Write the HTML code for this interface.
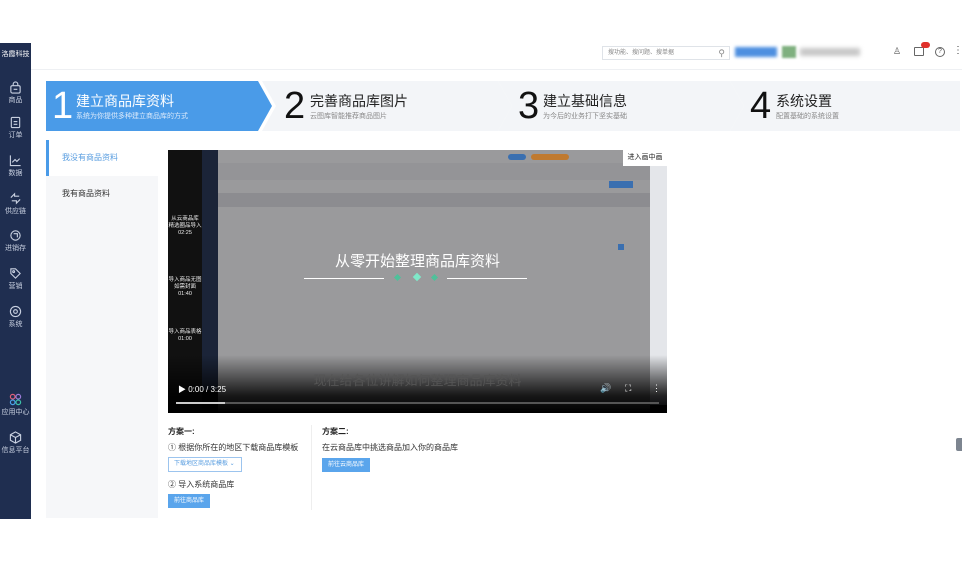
<!DOCTYPE html>
<html><head><meta charset="utf-8"><style>
*{margin:0;padding:0;box-sizing:border-box}
body{width:962px;height:561px;background:#fff;font-family:"Liberation Sans","Noto Sans CJK SC",sans-serif;position:relative;overflow:hidden;color:#333}
.abs{position:absolute}
.side{left:0;top:43px;width:31px;height:476px;background:#1f2e50;color:#c8d0e0;font-size:7px;text-align:center}
.side .it{position:absolute;left:0;width:31px}
.side svg{display:block;margin:0 auto 1px}
.hdr{left:31px;top:43px;width:931px;height:27px;background:#fff;border-bottom:1px solid #eef0f3}
.step{top:81px;height:50px;background:#f3f5f8}
.step .n{position:absolute;top:3px;font-size:38px;line-height:44px;color:#111;font-weight:300}
.step .t{position:absolute;top:10px;font-size:14px;color:#222}
.step .s{position:absolute;top:30px;font-size:7px;color:#888}
.menu{left:46px;top:140px;width:112px;height:378px;background:#f6f7f9}
.btn{background:#5aa5ec;color:#fff;font-size:6px;height:14px;line-height:14px;padding:0 6px;display:inline-block}
</style></head><body>
<div class="abs side">
 <div class="it" style="top:6px;font-size:7px;color:#fff">洛霞科技</div>
 <div class="it" style="top:38px"><svg width="13" height="13" viewBox="0 0 14 14" fill="none" stroke="#c8d0e0" stroke-width="1.2"><rect x="2" y="5" width="10" height="8" rx="1.5"/><path d="M4.5 5V3.5a2.5 2.5 0 015 0V5M5 9h4"/></svg>商品</div>
 <div class="it" style="top:73px"><svg width="13" height="13" viewBox="0 0 14 14" fill="none" stroke="#c8d0e0" stroke-width="1.2"><rect x="2.5" y="1.5" width="9" height="11" rx="1"/><path d="M5 6h4M5 9h4"/></svg>订单</div>
 <div class="it" style="top:111px"><svg width="13" height="13" viewBox="0 0 14 14" fill="none" stroke="#c8d0e0" stroke-width="1.2"><path d="M1.5 1.5v11h11M3.5 9l3-3 2 2 3-3"/></svg>数据</div>
 <div class="it" style="top:149px"><svg width="13" height="13" viewBox="0 0 14 14" fill="none" stroke="#c8d0e0" stroke-width="1.2"><path d="M2 6l4-4v2.5h5M12 8l-4 4V9.5H3"/></svg>供应链</div>
 <div class="it" style="top:186px"><svg width="13" height="13" viewBox="0 0 14 14" fill="none" stroke="#c8d0e0" stroke-width="1.2"><circle cx="7" cy="7" r="5"/><path d="M5 5h4v4"/></svg>进销存</div>
 <div class="it" style="top:224px"><svg width="13" height="13" viewBox="0 0 14 14" fill="none" stroke="#c8d0e0" stroke-width="1.2"><path d="M2 2h5l5 5-5 5-5-5z"/><circle cx="5" cy="5" r="1"/></svg>营销</div>
 <div class="it" style="top:262px"><svg width="13" height="13" viewBox="0 0 14 14" fill="none" stroke="#c8d0e0" stroke-width="1.2"><circle cx="7" cy="7" r="5.5"/><circle cx="7" cy="7" r="2"/></svg>系统</div>
 <div class="it" style="top:350px"><svg width="13" height="13" viewBox="0 0 14 14" fill="none" stroke-width="1.3"><circle cx="4" cy="4" r="2.5" stroke="#e0607a"/><circle cx="10" cy="4" r="2.5" stroke="#9b7bd8"/><circle cx="4" cy="10" r="2.5" stroke="#4aa0e8"/><circle cx="10" cy="10" r="2.5" stroke="#3cc0a8"/></svg>应用中心</div>
 <div class="it" style="top:388px"><svg width="13" height="13" viewBox="0 0 14 14" fill="none" stroke="#c8d0e0" stroke-width="1.2"><path d="M7 1l5.5 3v6L7 13 1.5 10V4zM1.5 4L7 7l5.5-3M7 7v6"/></svg>信息平台</div>
</div>
<div class="abs hdr"></div>
<div class="abs" style="left:602px;top:46px;width:128px;height:14px;border:1px solid #dfe3e8;font-size:6px;color:#888;line-height:12px;padding-left:5px">搜功能、搜问题、搜单据<span style="position:absolute;right:4px;top:0;font-size:9px">⚲</span></div>
<div class="abs" style="left:735px;top:47px;width:42px;height:10px;background:#4d8fe0;filter:blur(1.5px)"></div>
<div class="abs" style="left:782px;top:46px;width:14px;height:12px;background:#7fb07f;filter:blur(1px)"></div>
<div class="abs" style="left:800px;top:48px;width:60px;height:8px;background:#c8c8c8;filter:blur(2px)"></div>
<div class="abs" style="left:893px;top:46px;font-size:9px;color:#555">♙</div>
<div class="abs" style="left:914px;top:47px;width:10px;height:9px;border:1px solid #666;border-radius:1px"></div>
<div class="abs" style="left:921px;top:42px;width:9px;height:6px;background:#e0302a;border-radius:3px"></div>
<div class="abs" style="left:935px;top:47px;width:10px;height:10px;border:1px solid #666;border-radius:50%;font-size:7px;line-height:8px;text-align:center;color:#555">?</div>
<div class="abs" style="left:953px;top:45px;font-size:10px;color:#444">⋮</div>

<div class="abs step" style="left:46px;width:226px;background:#4a9be8;clip-path:polygon(0 0,212px 0,226px 25px,212px 50px,0 50px)">
 <div class="n" style="left:6px;color:#fff">1</div><div class="t" style="left:30px;color:#fff">建立商品库资料</div><div class="s" style="left:30px;color:#dbeafb">系统为你提供多种建立商品库的方式</div></div>
<div class="abs step" style="left:262px;width:250px;clip-path:polygon(0 0,236px 0,250px 25px,236px 50px,0 50px,14px 25px)">
 <div class="n" style="left:22px">2</div><div class="t" style="left:48px">完善商品库图片</div><div class="s" style="left:48px">云图库智能推荐商品图片</div></div>
<div class="abs step" style="left:498px;width:246px;clip-path:polygon(0 0,232px 0,246px 25px,232px 50px,0 50px,14px 25px)">
 <div class="n" style="left:20px">3</div><div class="t" style="left:45px">建立基础信息</div><div class="s" style="left:45px">为今后的业务打下坚实基础</div></div>
<div class="abs step" style="left:730px;width:230px;clip-path:polygon(0 0,230px 0,230px 50px,0 50px,14px 25px)">
 <div class="n" style="left:20px">4</div><div class="t" style="left:46px">系统设置</div><div class="s" style="left:46px">配置基础的系统设置</div></div>

<div class="abs menu"></div>
<div class="abs" style="left:46px;top:140px;width:112px;height:36px;background:#fff;border-left:3px solid #4a9be8;font-size:8px;color:#5a9ee0;line-height:36px;padding-left:13px">我没有商品资料</div>
<div class="abs" style="left:62px;top:188px;font-size:8px;color:#333">我有商品资料</div>

<div class="abs" style="left:168px;top:150px;width:499px;height:263px;background:#000;overflow:hidden">
 <div class="abs" style="left:0;top:0;width:34px;height:263px;background:#111"></div>
 <div class="abs" style="left:34px;top:0;width:16px;height:240px;background:#1b2438"></div>
 <div class="abs" style="left:50px;top:0;width:432px;height:263px;background:#9a9a9c"></div>
 <div class="abs" style="left:50px;top:13px;width:432px;height:17px;background:#949497"></div>
 <div class="abs" style="left:50px;top:43px;width:432px;height:14px;background:#8c8c90"></div>
 <div class="abs" style="left:482px;top:0;width:17px;height:255px;background:#e4e6ea"></div>
 <div class="abs" style="left:455px;top:0;width:44px;height:16px;background:#fff;font-size:7px;line-height:16px;text-align:center;color:#222">进入画中画</div>
 <div class="abs" style="left:340px;top:4px;width:18px;height:6px;background:#3a6fb0;border-radius:3px"></div>
 <div class="abs" style="left:363px;top:4px;width:38px;height:6px;background:#c07a30;border-radius:3px"></div>
 <div class="abs" style="left:441px;top:31px;width:24px;height:7px;background:#3a6fb0"></div>
 <div class="abs" style="left:450px;top:94px;width:6px;height:6px;background:#3a6fb0"></div>
 <div class="abs" style="left:0;top:66px;width:34px;font-size:5.5px;color:#eee;text-align:center;line-height:7px">从云商品库<br>精选圈品导入<br>02:25</div>
 <div class="abs" style="left:0;top:127px;width:34px;font-size:5.5px;color:#eee;text-align:center;line-height:7px">导入商品无图<br>如需封面<br>01:40</div>
 <div class="abs" style="left:0;top:179px;width:34px;font-size:5.5px;color:#eee;text-align:center;line-height:7px">导入商品表格<br>01:00</div>
 <div class="abs" style="left:0;top:100px;width:499px;text-align:center;font-size:15px;color:#fff">从零开始整理商品库资料</div>
 <div class="abs" style="left:136px;top:128px;width:80px;height:1px;background:#fff"></div>
 <div class="abs" style="left:279px;top:128px;width:80px;height:1px;background:#fff"></div>
 <div class="abs" style="left:227px;top:125px;width:5px;height:5px;background:#4fc09a;transform:rotate(45deg)"></div>
 <div class="abs" style="left:246px;top:124px;width:6px;height:6px;background:#7fe8c8;transform:rotate(45deg)"></div>
 <div class="abs" style="left:264px;top:125px;width:5px;height:5px;background:#4fc09a;transform:rotate(45deg)"></div>
 <div class="abs" style="left:0;top:205px;width:499px;height:58px;background:linear-gradient(rgba(0,0,0,0),rgba(0,0,0,.85) 70%,#000)"></div>
 <div class="abs" style="left:0;top:220px;width:499px;text-align:center;font-size:13px;color:#555">现在给各位讲解如何整理商品库资料</div>
 <div class="abs" style="left:10px;top:234px;font-size:8px;color:#fff">▶ 0:00 / 3:25</div>
 <div class="abs" style="left:432px;top:233px;font-size:9px;color:#fff">🔊</div>
 <div class="abs" style="left:457px;top:233px;font-size:9px;color:#fff">⛶</div>
 <div class="abs" style="left:484px;top:233px;font-size:9px;color:#fff">⋮</div>
 <div class="abs" style="left:8px;top:252px;width:483px;height:2px;background:#555"></div>
 <div class="abs" style="left:8px;top:252px;width:49px;height:2px;background:#ccc"></div>
</div>

<div class="abs" style="left:168px;top:426px;font-size:8px;font-weight:bold;color:#222">方案一:</div>
<div class="abs" style="left:168px;top:442px;font-size:8px;color:#333">① 根据你所在的地区下载商品库模板</div>
<div class="abs" style="left:168px;top:457px;width:74px;height:15px;border:1px solid #9cc4ee;font-size:6px;color:#5a9ee0;line-height:13px;padding-left:5px">下载地区商品库模板 ⌄</div>
<div class="abs" style="left:168px;top:479px;font-size:8px;color:#333">② 导入系统商品库</div>
<div class="abs btn" style="left:168px;top:494px">前往商品库</div>
<div class="abs" style="left:311px;top:425px;width:1px;height:85px;background:#eee"></div>
<div class="abs" style="left:322px;top:426px;font-size:8px;font-weight:bold;color:#222">方案二:</div>
<div class="abs" style="left:322px;top:442px;font-size:8px;color:#333">在云商品库中挑选商品加入你的商品库</div>
<div class="abs btn" style="left:322px;top:458px">前往云商品库</div>
<div class="abs" style="left:956px;top:438px;width:6px;height:13px;background:#7d8590;border-radius:2px 0 0 2px"></div>
</body></html>
